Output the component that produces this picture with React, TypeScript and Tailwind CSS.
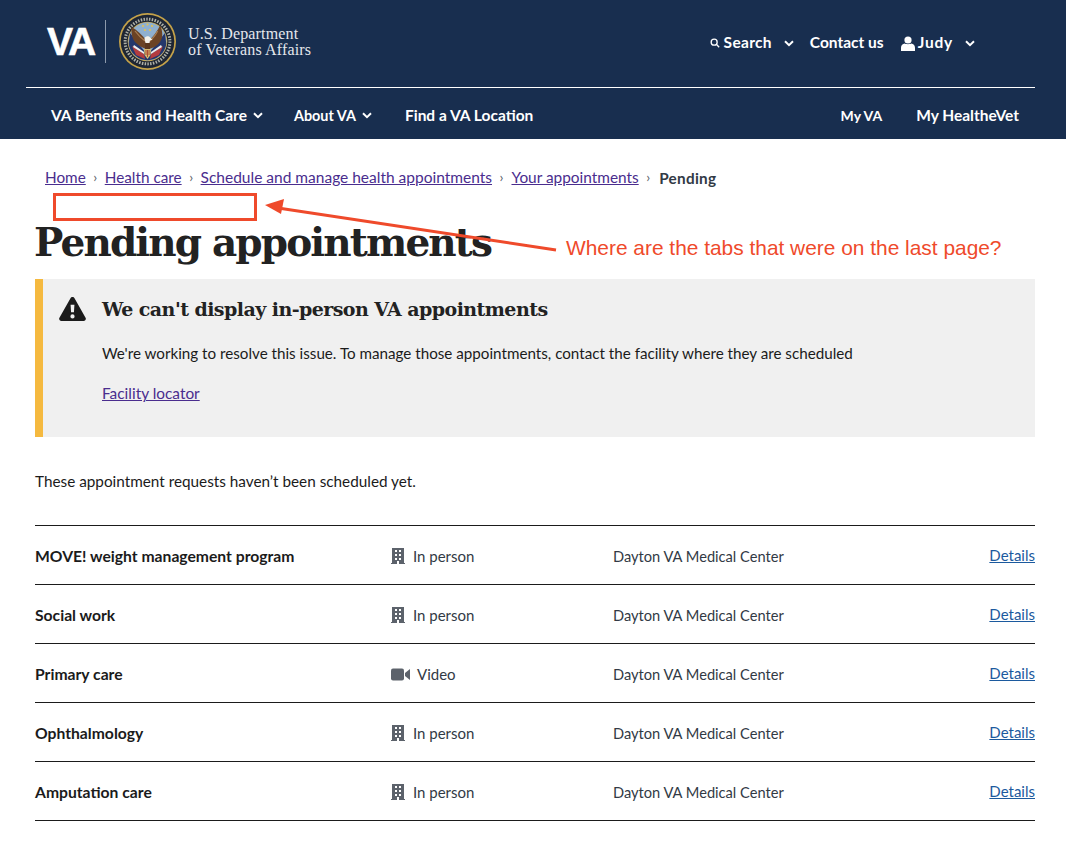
import React from "react";

const sans = "font-['Lato','Noto_Sans',sans-serif]";

function Chevron({ className = "" }: { className?: string }) {
  return (
    <svg viewBox="0 0 12 8" className={"w-[10px] h-[7px] " + className} fill="none" stroke="currentColor" strokeWidth="2.4">
      <path d="M1.2 1.4 6 6 10.800 1.400" />
    </svg>
  );
}

function Seal() {
  return (
    <svg viewBox="0 0 57 57" className="w-[57px] h-[57px] shrink-0">
      <circle cx="28.500" cy="28.500" r="28.500" fill="#c4a24a" />
      <circle cx="28.500" cy="28.500" r="26.800" fill="#1d2533" />
      <circle cx="28.500" cy="28.500" r="22.400" fill="none" stroke="#aeb0a6" strokeWidth="3" strokeDasharray="1.500 1.300" />
      <circle cx="28.500" cy="28.500" r="19.800" fill="#c9a850" />
      <circle cx="28.500" cy="28.500" r="19" fill="#8fb0cf" />
      <path d="M9.700 31 A19 19 0 0 0 47.300 31 L46 20 L30 40 L27 40 L11 20 Z" fill="#25376b" />
      <path d="M13 33 L25 41 L26 46 L17 42Z" fill="#b33c3f" />
      <path d="M15 32 L25 39 L25 41 L14 34Z" fill="#eeeeee" />
      <path d="M44 33 L32 41 L31 46 L40 42Z" fill="#b33c3f" />
      <path d="M42 32 L32 39 L32 41 L43 34Z" fill="#eeeeee" />
      <path d="M27 27 C23 22 18 17 12.500 14 C12 20 13 26 17 30 C20 33 24 35 27 36Z" fill="#6b4325" />
      <path d="M30 27 C34 24 38 19 41 12.500 C44 18 44 25 41 29 C38 33 34 35 30 36Z" fill="#6b4325" />
      <path d="M16 18 C19 22 22 25 26 28 M38.500 18 C37 22 34 25 31 28" stroke="#a97f54" strokeWidth="1.200" fill="none" />
      <path d="M26 28h5v8h-5z" fill="#5a371e" />
      <path d="M25.500 26 C25.500 22.500 30.500 22.500 31.500 25 L33.500 26.500 L31 27.500 L30.500 30 L26.500 30Z" fill="#f4f2ea" />
      <path d="M25 36 H32 L31.500 42 L28.500 46 L25.500 42Z" fill="#d6bc70" />
      <path d="M27 37 V42 M28.500 37 V44 M30 37 V42" stroke="#a8402f" strokeWidth="0.900" />
      <g fill="#e3c253">
        <circle cx="24" cy="13" r="1.100" />
        <circle cx="28.500" cy="11.500" r="1.100" />
        <circle cx="33" cy="13" r="1.100" />
        <circle cx="26" cy="17" r="1.100" />
        <circle cx="31" cy="17" r="1.100" />
      </g>
    </svg>
  );
}

function Building() {
  return (
    <svg viewBox="0 0 14 16" className="w-[14px] h-[16px] shrink-0" fill="#5c626b">
      <path fillRule="evenodd" d="M1 0h12v15h1v1H0v-1h1zM4 2v2h2V2zm4 0v2h2V2zM4 6v2h2V6zm4 0v2h2V6zM4 10v2h2v-2zm4 0v2h2v-2zM6 13v3h2v-3z" />
    </svg>
  );
}

function Camera() {
  return (
    <svg viewBox="0 0 19 13" className="w-[19px] h-[13px] shrink-0" fill="#5c626b">
      <rect x="0" y="0.500" width="13" height="12" rx="2" />
      <path d="M14 5l5-4v11l-5-4z" />
    </svg>
  );
}

const rows: [string, "p" | "v"][] = [
  ["MOVE! weight management program", "p"],
  ["Social work", "p"],
  ["Primary care", "v"],
  ["Ophthalmology", "p"],
  ["Amputation care", "p"],
];

export default function App() {
  return (
    <div className={"relative w-[1066px] h-[846px] overflow-hidden bg-white text-[#1b1b1b] " + sans}>
      <header className="bg-[#182e4f] h-[139px] text-white px-[26px] pr-[31px]">
        <div className="h-[88px] border-b border-white flex items-start">
          <div className="flex items-center pl-[21px] pt-[13px]">
            <span className="font-['Liberation_Sans',sans-serif] font-bold text-[39px] leading-[56px] tracking-[-2px] w-[47px] [-webkit-text-stroke:0.6px_white]">VA</span>
            <span className="w-px h-[43px] bg-[#8d9aac] ml-[11px] mr-[13px]" />
            <Seal />
            <span className="ml-[12px] font-['Liberation_Serif',serif] text-[16px] leading-[16px] text-[#e4e7ec] tracking-[0.15px]">
              U.S. Department<br />of Veterans Affairs
            </span>
          </div>
          <div className="ml-auto mr-[60px] flex items-center h-[16px] mt-[35px] text-[15.5px] font-bold">
            <svg viewBox="0 0 12 12" className="w-[10px] h-[10px] mr-[4px]" fill="none" stroke="currentColor" strokeWidth="1.600">
              <circle cx="5" cy="5" r="3.600" />
              <path d="M7.600 7.600 11 11" />
            </svg>
            <span className="tracking-[0.3px]">Search</span>
            <Chevron className="ml-[12px]" />
            <span className="ml-[16px]">Contact us</span>
            <svg viewBox="0 0 14 15" className="w-[14px] h-[15px] ml-[17px] mr-[3px]" fill="currentColor">
              <circle cx="7" cy="4" r="3.600" />
              <path d="M0 15v-3.200C0 9.400 1.800 8 3.600 7.600c1 .8 5.800.8 6.800 0C12.200 8 14 9.400 14 11.800V15z" />
            </svg>
            <span className="tracking-[0.8px]">Judy</span>
            <Chevron className="ml-[12px]" />
          </div>
        </div>
        <nav className="h-[51px] pt-[4px] flex items-center text-[15.5px] font-bold pl-[25px] pr-[16px]">
          <span>VA Benefits and Health Care</span>
          <Chevron className="ml-[6px]" />
          <span className="ml-[31px] text-[14.4px]">About VA</span>
          <Chevron className="ml-[6px]" />
          <span className="ml-[33px]">Find a VA Location</span>
          <span className="ml-auto text-[14px]">My VA</span>
          <span className="ml-[34px]">My HealtheVet</span>
        </nav>
      </header>

      <main className="px-[35px] pr-[31px]">
        <div className="pl-[10px] pt-[25px] h-[50px] flex items-center text-[15.3px] leading-[20px] gap-[7.5px] text-[#4a2d8e]">
          <span className="underline">Home</span><span className="text-[#5b616b] text-[14px]">›</span>
          <span className="underline">Health care</span><span className="text-[#5b616b] text-[14px]">›</span>
          <span className="underline text-[15.5px]">Schedule and manage health appointments</span><span className="text-[#5b616b] text-[14px]">›</span>
          <span className="underline text-[15.4px] ml-[0.5px]">Your appointments</span><span className="text-[#5b616b] text-[14px]">›</span>
          <span className="font-bold text-[#323a45] pt-[3px] tracking-[0.3px] ml-[1.5px]">Pending</span>
        </div>

        <h1 className="mt-[27px] -ml-px font-['DejaVu_Serif',serif] font-bold text-[39px] leading-[52px] tracking-[-1.85px] text-[#222]">Pending appointments</h1>

        <section className="mt-[11px] h-[158px] bg-[#f0f0f0] border-l-[8px] border-[#f5b93f] pl-[16px] pt-[16px] relative">
          <div className="flex items-center h-[28px]">
            <svg viewBox="0 0 28 25" className="w-[27px] h-[24px] shrink-0" fill="#1b1b1b">
              <path fillRule="evenodd" d="M14 0c.9 0 1.700.5 2.100 1.200l11.500 20.300c.9 1.600-.2 3.500-2 3.500H2.400c-1.800 0-2.900-1.900-2-3.500L11.900 1.200C12.300.5 13.100 0 14 0zM12 8l.5 8h3l.5-8zm2 10a2.200 2.200 0 1 0 0 4.400 2.200 2.200 0 0 0 0-4.400z" />
            </svg>
            <h2 className="ml-[16px] font-['DejaVu_Serif',serif] font-bold text-[19px] tracking-[-0.55px] text-[#222]">We can't display in-person VA appointments</h2>
          </div>
          <p className="ml-[43px] mt-[20px] text-[15.2px] leading-[20px]">We're working to resolve this issue. To manage those appointments, contact the facility where they are scheduled</p>
          <p className="ml-[43px] mt-[20px] text-[15.4px] leading-[20px] text-[#4a2d8e] underline">Facility locator</p>
        </section>

        <p className="mt-[34px] text-[15.3px] leading-[20px]">These appointment requests haven’t been scheduled yet.</p>

        <div className="mt-[34px] border-t border-[#1b1b1b] text-[15px]">
          {rows.map(([name, kind]) => (
            <div key={name} className="h-[59px] pt-[2px] border-b border-[#1b1b1b] grid grid-cols-[356px_222px_1fr_auto] items-center">
              <span className="font-bold text-[15.7px] mt-[2px]">{name}</span>
              <span className="flex items-center text-[#323a45]">
                {kind === "p" ? <Building /> : <Camera />}
                <span className={kind === "p" ? "ml-[8px]" : "ml-[7px]"}>{kind === "p" ? "In person" : "Video"}</span>
              </span>
              <span className="text-[#323a45] text-[14.65px] mt-[2px]">Dayton VA Medical Center</span>
              <span className="text-[#1c5a9e] underline -mt-[2px]">Details</span>
            </div>
          ))}
        </div>
      </main>

      <div className="absolute left-[53px] top-[193px] w-[204px] h-[28px] border-[3px] border-[#ef4a2b]" />
      <svg className="absolute left-[260px] top-[195px] w-[300px] h-[60px]" viewBox="0 0 300 60">
        <path d="M18 13 296 55" stroke="#ef4a2b" strokeWidth="3" fill="none" />
        <path d="M5 10 24 4 21 19z" fill="#ef4a2b" />
      </svg>
      <span className="absolute left-[566px] top-[235px] font-['Liberation_Sans',sans-serif] text-[20.9px] leading-[26px] text-[#ef4a2b] whitespace-nowrap">Where are the tabs that were on the last page?</span>
    </div>
  );
}
